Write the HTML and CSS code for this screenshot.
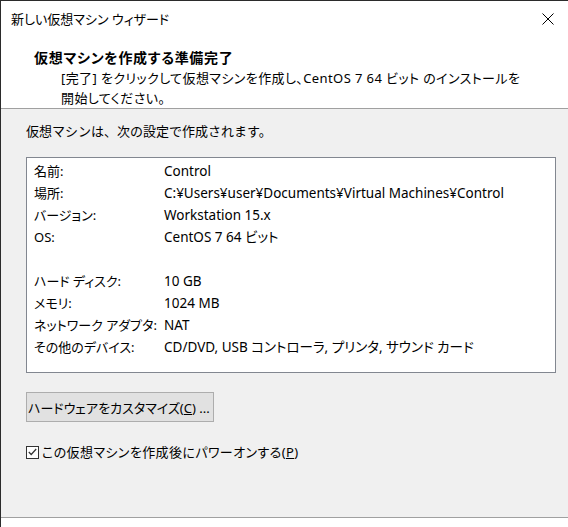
FILE: index.html
```html
<!DOCTYPE html>
<html lang="ja">
<head>
<meta charset="utf-8">
<link rel="stylesheet" href="styles.css">
</head>
<body>
<div class="window">
  <div class="titlebar">
    <span class="title">新しい仮想マシン ウィザード</span>
    <svg class="close" width="12" height="12" viewBox="0 0 12 12"><path d="M0.5 0.5 L11.5 11.5 M11.5 0.5 L0.5 11.5" stroke="#000" stroke-width="1"/></svg>
  </div>
  <div class="header">
    <div class="h-title">仮想マシンを作成する準備完了</div>
    <div class="h-desc">[完了] をクリックして仮想マシンを作成し、CentOS 7 64 ビット のインストールを<br>開始してください。</div>
  </div>
  <div class="content">
    <div class="intro">仮想マシンは、次の設定で作成されます。</div>
    <div class="summary">
      <div class="row"><span class="label">名前:</span><span class="value">Control</span></div>
      <div class="row"><span class="label">場所:</span><span class="value">C:¥Users¥user¥Documents¥Virtual Machines¥Control</span></div>
      <div class="row"><span class="label">バージョン:</span><span class="value">Workstation 15.x</span></div>
      <div class="row"><span class="label">OS:</span><span class="value">CentOS 7 64 ビット</span></div>
      <div class="row"></div>
      <div class="row"><span class="label">ハード ディスク:</span><span class="value">10 GB</span></div>
      <div class="row"><span class="label">メモリ:</span><span class="value">1024 MB</span></div>
      <div class="row"><span class="label">ネットワーク アダプタ:</span><span class="value">NAT</span></div>
      <div class="row"><span class="label">その他のデバイス:</span><span class="value">CD/DVD, USB コントローラ, プリンタ, サウンド カード</span></div>
    </div>
    <button class="btn">ハードウェアをカスタマイズ(<u>C</u>) ...</button>
    <label class="check">
      <span class="box"><svg width="9" height="8" viewBox="0 0 9 8"><path d="M0.8 4 L3.2 6.5 L8.2 1" fill="none" stroke="#333" stroke-width="1.2"/></svg></span>
      <span class="check-text">この仮想マシンを作成後にパワーオンする(<u>P</u>)</span>
    </label>
  </div>
  <div class="footer"></div>
</div>
</body>
</html>
```
FILE: styles.css
```css
html, body {
  margin: 0;
  padding: 0;
  width: 568px;
  height: 527px;
  overflow: hidden;
  background: #f0f0f0;
}
.window {
  width: 568px;
  height: 527px;
  box-sizing: border-box;
  border-left: 1px solid #2b2b2b;
  border-top: 1px solid #2b2b2b;
  display: flex;
  flex-direction: column;
  font-family: "Noto Sans", "Noto Sans CJK JP", sans-serif;
  font-size: 13px;
  color: #000;
  font-feature-settings: "palt";
}
.titlebar {
  height: 35px;
  background: #fff;
  display: flex;
  align-items: center;
  justify-content: space-between;
  padding: 0 14px 0 10px;
}
.title {
  font-size: 13px;
}
.header {
  background: #fff;
  height: 73px;
  border-bottom: 1px solid #a0a0a0;
  padding-left: 33px;
  box-sizing: border-box;
}
.h-title {
  font-weight: bold;
  font-size: 14px;
  line-height: 18px;
  margin-top: 13px;
  letter-spacing: 0.7px;
}
.h-desc {
  padding-left: 27px;
  line-height: 20px;
  margin-top: 1px;
  letter-spacing: 0.4px;
}
.content {
  flex: 1;
  padding: 13px 12px 0 25px;
}
.intro {
  line-height: 18px;
  font-feature-settings: normal;
}
.summary {
  margin-top: 17px;
  background: #fff;
  border: 1px solid #828790;
  height: 216px;
  box-sizing: border-box;
  padding: 2px 7px 0 7px;
}
.row {
  height: 22px;
  line-height: 22px;
  display: flex;
  white-space: nowrap;
}
.label {
  width: 130px;
  flex: none;
}
.value {
  font-size: 13.5px;
}
.btn {
  margin-top: 19px;
  display: block;
  width: 188px;
  height: 30px;
  padding: 0 0 0 1px;
  text-align: left;
  background: #e1e1e1;
  border: 1px solid #adadad;
  font-family: inherit;
  font-size: 13px;
  font-feature-settings: "palt";
  color: #000;
  white-space: nowrap;
}
.check {
  margin-top: 22px;
  display: flex;
  align-items: center;
  gap: 3px;
  line-height: 16px;
}
.check-text {
  letter-spacing: 0.4px;
}
.box {
  width: 13px;
  height: 13px;
  box-sizing: border-box;
  border: 1px solid #333;
  background: #fff;
  display: flex;
  align-items: center;
  justify-content: center;
}
.footer {
  height: 9px;
  border-top: 1px solid #a0a0a0;
  background: #fff;
}
u {
  text-decoration: underline;
}
```
